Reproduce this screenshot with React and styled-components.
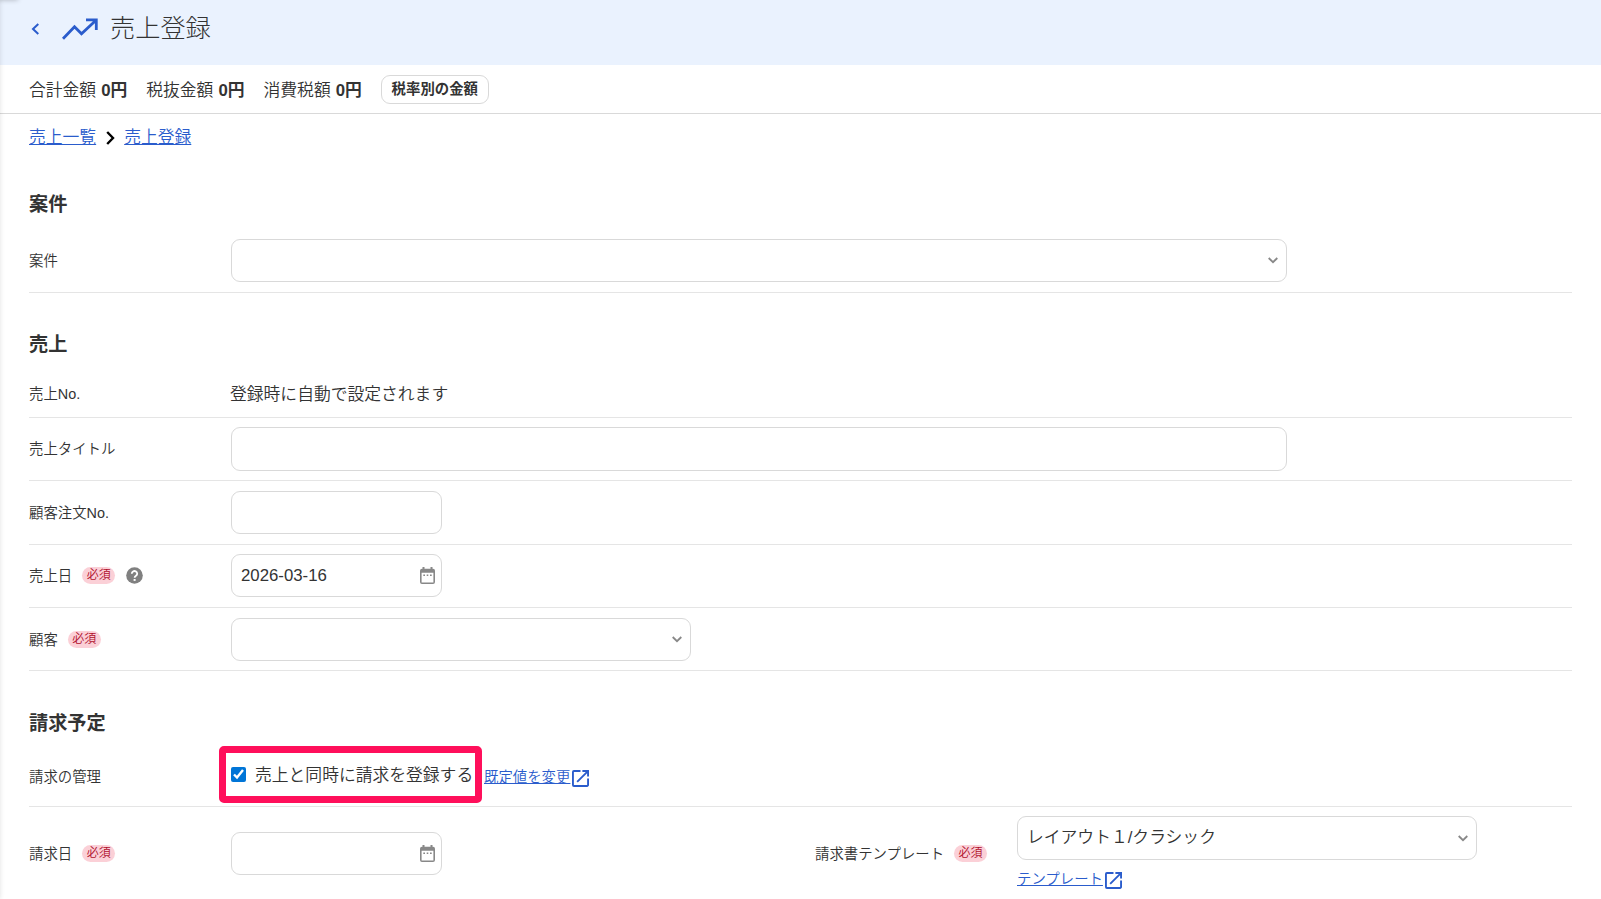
import React from "react";
import styled, { createGlobalStyle } from "styled-components";

const GlobalStyle = createGlobalStyle`
  * {
    box-sizing: border-box;
  }
  body {
    margin: 0;
    height: 899px;
    overflow: hidden;
    background: #fff;
    color: #333;
    font-family: "Liberation Sans", "Noto Sans CJK JP", sans-serif;
    font-size: 16.8px;
    font-weight: 350;
    line-height: 24px;
  }
`;

const Page = styled.div`
  position: relative;
  height: 899px;
  overflow: hidden;
`;

const EdgeShadow = styled.div`
  position: absolute;
  top: 0;
  left: -10px;
  width: 10px;
  height: 899px;
  box-shadow: 0 0 5px rgba(0, 0, 0, 0.12);
`;

const CornerShadow = styled.div`
  position: absolute;
  top: -10px;
  left: -10px;
  width: 28px;
  height: 10px;
  box-shadow: 0 0 5px rgba(0, 0, 0, 0.25);
`;

const Header = styled.header`
  display: flex;
  align-items: center;
  height: 65px;
  padding: 0 0 9px 31px;
  background: #eaf2fe;
  svg {
    margin-top: 2px;
  }
`;

const TrendIcon = styled.svg`
  margin-left: 22px;
`;

const Title = styled.h1`
  margin: 0 0 0 11px;
  font-size: 25.2px;
  font-weight: 300;
  line-height: 36px;
`;

const Summary = styled.div`
  display: flex;
  align-items: center;
  gap: 19px;
  height: 49px;
  padding-left: 29px;
  border-bottom: 1px solid #d9d9d9;
`;

const Amount = styled.div`
  padding-top: 3px;
  white-space: nowrap;
  b {
    margin-left: 5px;
    font-weight: 700;
  }
`;

const RateButton = styled.button`
  width: 108px;
  height: 29px;
  padding: 0;
  border: 1px solid #d9d9d9;
  border-radius: 9px;
  background: #fff;
  color: #333;
  font: 700 14.4px/20px "Liberation Sans", "Noto Sans CJK JP", sans-serif;
`;

const Breadcrumb = styled.nav`
  display: flex;
  align-items: center;
  height: 46px;
  padding: 1px 0 0 29px;
  svg {
    margin: 1px 9px 0 10px;
  }
`;

const Link = styled.a`
  display: inline-flex;
  align-items: center;
  color: #2a5ccc;
  font-size: ${(props) => props.$size || "16.8px"};
  text-decoration: underline;
  white-space: nowrap;
`;

const Section = styled.section`
  padding: 0 29px;
`;

const SectionTitle = styled.h2`
  height: ${(props) => props.$height}px;
  margin: 0;
  padding-top: ${(props) => props.$top || 41}px;
  font-size: 19.2px;
  font-weight: 700;
  line-height: 24px;
`;

const Row = styled.div`
  display: flex;
  align-items: center;
  height: ${(props) => props.$height}px;
  border-bottom: 1px solid #e5e5e5;
`;

const Label = styled.div`
  display: flex;
  align-items: center;
  width: 202px;
  margin-left: ${(props) => props.$left || 0}px;
  padding-top: ${(props) => props.$top || 0}px;
  font-size: 14.4px;
  white-space: nowrap;
  svg {
    margin: 0 0 1px 11px;
  }
`;

const PlainValue = styled.div`
  padding-top: 2px;
  margin-left: -1px;
`;

const Required = styled.span`
  width: 33px;
  height: 17px;
  margin: 0 0 1px 10px;
  border-radius: 9px;
  background: #fbd0d7;
  color: #b00f2c;
  font-size: 12px;
  line-height: 17px;
  text-align: center;
`;

const Field = styled.div`
  display: flex;
  align-items: center;
  justify-content: space-between;
  width: ${(props) => props.$width}px;
  height: ${(props) => props.$height || 43}px;
  padding: 0 ${(props) => props.$right || 8}px 0 9px;
  border: 1px solid #d9d9d9;
  border-radius: 9px;
  background: #fff;
`;

const DateField = styled(Field)`
  margin-bottom: 2px;
`;

const DateValue = styled.span`
  padding-top: 2px;
`;

const Highlight = styled.div`
  display: flex;
  align-items: center;
  width: 263px;
  height: 57px;
  margin: 0 0 3px -12px;
  padding: 3px 0 0 5px;
  border: 7px solid #ff0f5b;
  border-radius: 5px;
  white-space: nowrap;
`;

const Checkbox = styled.input`
  width: 15px;
  height: 15px;
  margin: 0 9px 4px 0;
  accent-color: #0075d7;
`;

const BillingRow = styled.div`
  display: flex;
  align-items: center;
  height: 94px;
`;

const Template = styled.div`
  margin-top: -1px;
`;

const ExternalLink = styled.div`
  display: flex;
  align-items: center;
  gap: 2px;
  margin-top: ${(props) => props.$top || 0}px;
  margin-left: ${(props) => props.$left || 0}px;
  svg {
    margin-top: 3px;
  }
`;

function Caret() {
  return (
    <svg width="10" height="7" viewBox="0 0 10 7" fill="none" stroke="#888" strokeWidth="1.8">
      <path d="M.7 1 5 5.2 9.3 1" />
    </svg>
  );
}

function Calendar() {
  return (
    <svg width="15" height="17" viewBox="0 0 15 17" fill="#888">
      <path
        d="M2.5 0h2v1.8h6V0h2v1.8H13A2 2 0 0 1 15 3.8V15a2 2 0 0 1-2 2H2a2 2 0 0 1-2-2V3.8a2 2 0 0 1 2-2h.5zM1.6 5.8v9.6h11.8V5.8z"
        fillRule="evenodd"
      />
      <path d="M3.3 7.6H5v1.5H3.3zM6.7 7.6h1.6v1.5H6.7zM10 7.6h1.7v1.5H10z" />
    </svg>
  );
}

function Help() {
  return (
    <svg width="17" height="17" viewBox="0 0 17 17">
      <circle cx="8.5" cy="8.5" r="8.3" fill="#808080" />
      <path d="M5.8 6.7a2.7 2.6 0 1 1 4.2 2.1c-.9.6-1.4 1-1.4 2" fill="none" stroke="#fff" strokeWidth="1.8" />
      <path d="M7.6 12h2v1.9h-2z" fill="#fff" />
    </svg>
  );
}

function External() {
  return (
    <svg width="17" height="17" viewBox="3 3 18 18" fill="#2a5ccc">
      <path d="M19 19H5V5h7V3H5a2 2 0 0 0-2 2v14a2 2 0 0 0 2 2h14c1.1 0 2-.9 2-2v-7h-2zM14 3v2h3.59l-9.83 9.83 1.41 1.41L19 6.41V10h2V3z" />
    </svg>
  );
}

export default function App() {
  return (
    <Page>
      <GlobalStyle />
      <Header>
        <svg width="9" height="12" viewBox="0 0 9 12" fill="none" stroke="#2a5ccc" strokeWidth="2">
          <path d="M7.3 1 2 6l5.3 5" />
        </svg>
        <TrendIcon width="37" height="22" viewBox="0 0 37 22" fill="none" stroke="#2a5ccc" strokeWidth="2.8">
          <path d="M1 20.8 12.5 8.8l7 7L34 2.2M24 1.8h10.3V12" />
        </TrendIcon>
        <Title>売上登録</Title>
      </Header>
      <Summary>
        <Amount>合計金額<b>0円</b></Amount>
        <Amount>税抜金額<b>0円</b></Amount>
        <Amount>消費税額<b>0円</b></Amount>
        <RateButton>税率別の金額</RateButton>
      </Summary>
      <Breadcrumb>
        <Link>売上一覧</Link>
        <svg width="9" height="14" viewBox="0 0 9 14" fill="none" stroke="#000" strokeWidth="2.4">
          <path d="M1.2 1 7 7l-5.8 6" />
        </svg>
        <Link>売上登録</Link>
      </Breadcrumb>

      <Section>
        <SectionTitle $height={69} $top={33}>案件</SectionTitle>
        <Row $height={64}>
          <Label>案件</Label>
          <Field $width={1056}><span /><Caret /></Field>
        </Row>
      </Section>

      <Section>
        <SectionTitle $height={77} $top={40}>売上</SectionTitle>
        <Row $height={48}>
          <Label>売上No.</Label>
          <PlainValue>登録時に自動で設定されます</PlainValue>
        </Row>
        <Row $height={63}>
          <Label>売上タイトル</Label>
          <Field $width={1056} $height={44} />
        </Row>
        <Row $height={64}>
          <Label>顧客注文No.</Label>
          <Field $width={211} />
        </Row>
        <Row $height={63}>
          <Label>売上日<Required>必須</Required><Help /></Label>
          <DateField $width={211} $right={6}><DateValue>2026-03-16</DateValue><Calendar /></DateField>
        </Row>
        <Row $height={63}>
          <Label $top={1}>顧客<Required>必須</Required></Label>
          <Field $width={460}><span /><Caret /></Field>
        </Row>
      </Section>

      <Section>
        <SectionTitle $height={75}>請求予定</SectionTitle>
        <Row $height={61}>
          <Label $top={2}>請求の管理</Label>
          <Highlight>
            <Checkbox type="checkbox" defaultChecked />
            売上と同時に請求を登録する
          </Highlight>
          <ExternalLink $left={2} $top={1}><Link $size="14.4px">既定値を変更</Link><External /></ExternalLink>
        </Row>
        <BillingRow>
          <Label>請求日<Required>必須</Required></Label>
          <DateField $width={211} $right={6}><span /><Calendar /></DateField>
          <Label $left={373}>請求書テンプレート<Required>必須</Required></Label>
          <Template>
            <Field $width={460} $height={44}>レイアウト１/クラシック<Caret /></Field>
            <ExternalLink $top={7}><Link $size="14.4px">テンプレート</Link><External /></ExternalLink>
          </Template>
        </BillingRow>
      </Section>
      <EdgeShadow />
      <CornerShadow />
    </Page>
  );
}
